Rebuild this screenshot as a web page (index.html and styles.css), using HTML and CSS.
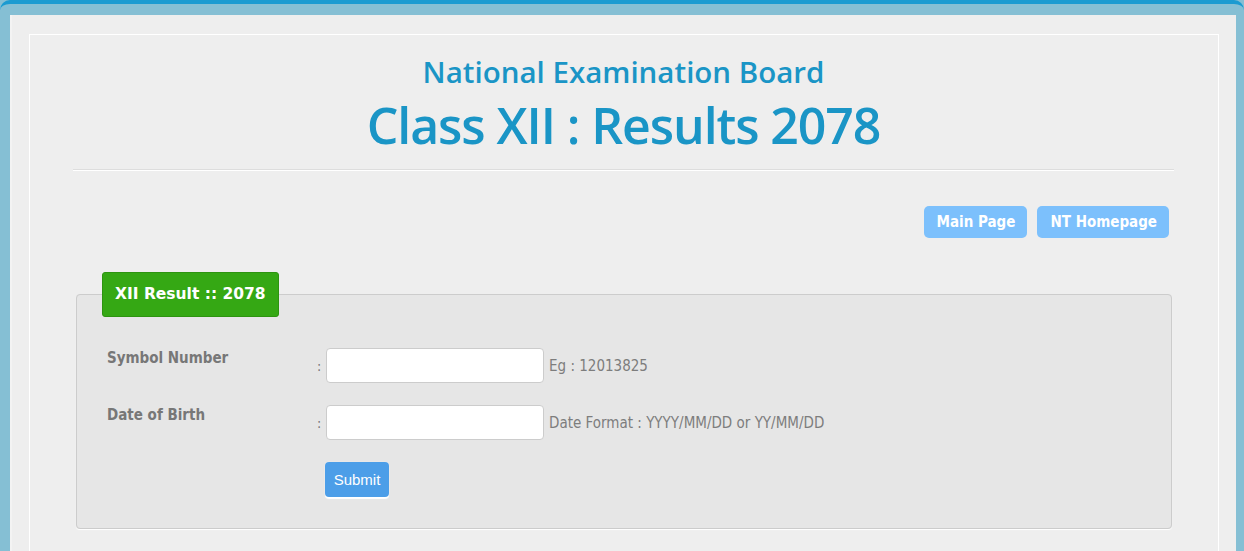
FILE: index.html
```html
<!DOCTYPE html>
<html lang="en">
<head>
<meta charset="utf-8">
<title>Class XII : Results 2078</title>
<link rel="stylesheet" href="styles.css">
</head>
<body>
<div class="frame">
  <div class="page">
    <div class="container">
      <header class="header">
        <h2 class="board">National Examination Board</h2>
        <h1 class="title">Class XII : Results 2078</h1>
      </header>
      <hr class="rule">
      <nav class="links">
        <a class="link-btn" href="#">Main Page</a>
        <a class="link-btn" href="#">NT Homepage</a>
      </nav>
      <form class="result-form">
        <fieldset class="box">
          <legend class="legend">XII Result :: 2078</legend>
          <div class="row">
            <label class="label">Symbol Number</label>
            <span class="colon">:</span>
            <input class="field" type="text">
            <span class="hint">Eg : 12013825</span>
          </div>
          <div class="row">
            <label class="label">Date of Birth</label>
            <span class="colon">:</span>
            <input class="field" type="text">
            <span class="hint">Date Format : YYYY/MM/DD or YY/MM/DD</span>
          </div>
          <div class="row submit-row">
            <button class="submit" type="button">Submit</button>
          </div>
        </fieldset>
      </form>
    </div>
  </div>
</div>
</body>
</html>
```

FILE: styles.css
```css
html, body {
  margin: 0;
  padding: 0;
  background: #85bfd4;
}
body {
  font-family: "DejaVu Sans Condensed", "DejaVu Sans", Verdana, sans-serif;
}
.frame {
  background: #85bfd4;
  border-top: 4px solid #1b9bd1;
  border-radius: 10px 10px 0 0;
  padding: 11px 8px 0 10px;
}
.page {
  background: #eeeeee;
  border-left: 2px solid #f3f3f3;
  padding: 19px 17px 0 17px;
}
.container {
  border: 1px solid #ffffff;
  border-bottom: none;
  padding: 0 44px 60px 43px;
}
.header {
  text-align: center;
  color: #1a95c6;
  padding-top: 19px;
  font-family: "Open Sans", "DejaVu Sans", sans-serif;
}
.board {
  margin: 0;
  font-size: 29.5px;
  line-height: 36px;
  font-weight: 600;
}
.title {
  margin: 0;
  font-size: 50px;
  line-height: 71px;
  font-weight: 600;
  letter-spacing: -1.1px;
}
.rule {
  margin: 8px 0 0;
  border: 0;
  border-top: 1px solid #dddddd;
  border-bottom: 1px solid #ffffff;
  height: 0;
}
.links {
  display: flex;
  justify-content: flex-end;
  gap: 10px;
  margin: 35px 5px 0 0;
}
.link-btn {
  display: block;
  background: #7cc0fc;
  color: #ffffff;
  font-weight: bold;
  font-size: 15px;
  line-height: 32px;
  padding: 0 12px 0 13px;
  border-radius: 5px;
  text-decoration: none;
}
.result-form {
  margin: 34px 2px 0 3px;
}
.box {
  margin: 0;
  background: #e6e6e6;
  border: 1px solid #cccccc;
  border-radius: 4px;
  box-shadow: 0 1px 1px #ffffff;
  padding: 8px 25px 31px 30px;
}
.legend {
  background: #35a814;
  border: 1px solid #2d9410;
  border-radius: 3px;
  color: #ffffff;
  font-family: "DejaVu Sans", Verdana, sans-serif;
  font-weight: bold;
  font-size: 15.5px;
  line-height: 43px;
  padding: 0 12px;
  margin-left: -5px;
}
.row {
  display: flex;
  align-items: center;
  margin-top: 22px;
}
.row:first-of-type {
  margin-top: 23px;
}
.label {
  align-self: flex-start;
  width: 210px;
  color: #777777;
  font-weight: bold;
  font-size: 15px;
  line-height: 20px;
}
.colon {
  color: #777777;
  font-size: 14px;
  width: 9px;
}
.field {
  box-sizing: border-box;
  width: 218px;
  height: 35px;
  margin: 0;
  background: #ffffff;
  border: 1px solid #cccccc;
  border-radius: 4px;
}
.hint {
  margin-left: 5px;
  color: #7d7d7d;
  font-size: 15px;
}
.submit-row {
  padding-left: 218px;
}
.submit {
  box-sizing: border-box;
  height: 35px;
  width: 64px;
  padding: 0;
  background: #4c9ee8;
  border: 0;
  border-radius: 4px;
  box-shadow: 0 2px 1px #ffffff, 0 0 1px #ffffff;
  color: #ffffff;
  font-family: "Liberation Sans", Arial, sans-serif;
  font-size: 15px;
}
```
